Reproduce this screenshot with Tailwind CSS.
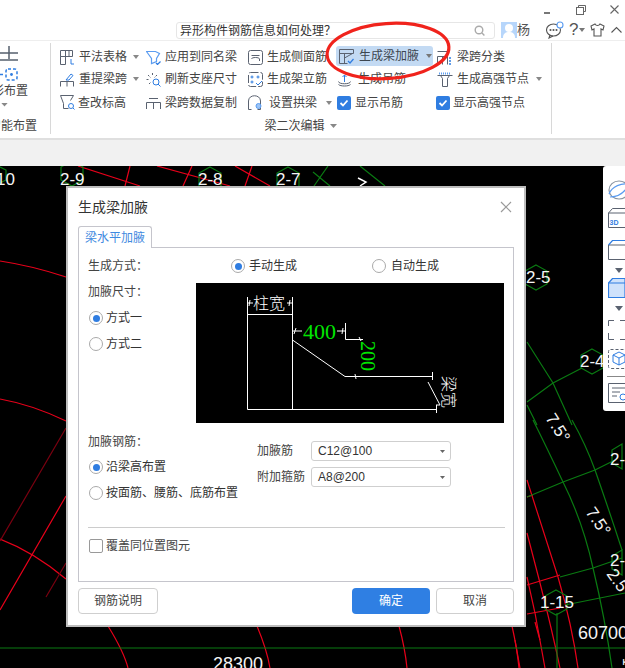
<!DOCTYPE html>
<html lang="zh">
<head>
<meta charset="utf-8">
<script src="https://cdn.jsdelivr.net/npm/@tailwindcss/browser@4"></script>
</head>
<body class="m-0 bg-black">
<div class="relative flex h-[668px] w-[625px] flex-col overflow-hidden font-['Liberation_Sans','Noto_Sans_CJK_SC',sans-serif] text-[12px] text-[#444]">

  <!-- title strip -->
  <header class="relative flex h-[41px] shrink-0 items-start border-b border-[#eeeeee] bg-white pl-[176px] pt-[22px]">
    <div class="flex h-[17px] w-[319px] items-center justify-between rounded-[3px] border border-[#e6e6e6] pl-[3px] pr-[9px] text-[#333]">
      <span>异形构件钢筋信息如何处理？</span>
      <svg class="h-[11px] w-[11px]" viewBox="0 0 11 11" fill="none" stroke="#aaa" stroke-width="1.4"><circle cx="5" cy="5" r="3.8"/><path d="M8 8l2.4 2.4"/></svg>
    </div>
    <div class="ml-[6px] flex items-center">
      <svg class="h-[16px] w-[16px]" viewBox="0 0 16 16"><rect width="16" height="16" fill="#b7d6fb"/><circle cx="8" cy="6" r="4" fill="#fff"/><path d="M2 16c0-5 3-6 6-6s6 1 6 6z" fill="#fff"/></svg>
      <span class="text-[13px] leading-[16px] text-[#555]">杨</span>
    </div>
    <svg class="ml-[16px] mt-[-1px] h-[18px] w-[18px]" viewBox="0 0 18 18" fill="none" stroke="#555" stroke-width="1.1"><ellipse cx="7.5" cy="9" rx="7" ry="6"/><path d="M4 14l-1 3 4-2"/><circle cx="4.5" cy="9" r=".5"/><circle cx="7.5" cy="9" r=".5"/><circle cx="10.5" cy="9" r=".5"/><circle cx="14" cy="4" r="3" fill="#fff" stroke="#5b9cf0"/></svg>
    <span class="ml-[5px] mt-[-2px] text-[17px] leading-[20px] text-[#555]">?</span>
    <svg class="ml-[1px] mt-[6px] h-[4px] w-[6px]" viewBox="0 0 6 4"><path d="M0 0h6L3 4z" fill="#777"/></svg>
    <svg class="ml-[5px] mt-[1px] h-[14px] w-[15px]" viewBox="0 0 15 14" fill="none" stroke="#555" stroke-width="1.1"><path d="M5 1L1 3l1 4 2-1v7h7V6l2 1 1-4-4-2c-1 2-4 2-5 0z"/></svg>
    <svg class="ml-[6px] mt-[4px] h-[7px] w-[11px]" viewBox="0 0 11 7" fill="none" stroke="#555" stroke-width="1.1"><path d="M.5 6.500l5-5 5 5"/></svg>
    <!-- window buttons -->
    <div class="absolute left-[544px] top-[5px] flex w-[81px] items-start">
      <span class="mt-[7px] h-[2px] w-[6px] bg-[#777]"></span>
      <svg class="ml-[26px] h-[10px] w-[10px]" viewBox="0 0 10 10" fill="none" stroke="#666"><path d="M2.500 2.500V.5h7v6h-2"/><rect x=".5" y="2.5" width="7" height="7"/></svg>
      <svg class="ml-[24px] h-[9px] w-[9px]" viewBox="0 0 9 9" fill="none" stroke="#666" stroke-width="1.1"><path d="M.5.5l8 8M8.500.5l-8 8"/></svg>
    </div>
  </header>

  <!-- ribbon -->
  <section class="flex h-[99px] shrink-0 border-b-2 border-[#dfdfdf] bg-white">
    <div class="mb-[4px] mt-[2px] flex w-[51px] shrink-0 flex-col overflow-hidden border-r border-[#d8d8d8]">
      <svg class="mt-[2px] h-[36px] w-[20px] shrink-0" viewBox="0 0 20 36" fill="none" stroke-width="1.5"><path d="M0 8h18M9 1v13M0 15h18" stroke="#55606e"/><rect x="6" y="24" width="11" height="11" rx="2" stroke="#2f7de1" stroke-dasharray="3 2"/><circle cx="11.500" cy="29.500" r="1.400" fill="#2f7de1" stroke="none"/><path d="M0 29.500h3" stroke="#2f7de1"/></svg>
      <div class="mt-[3px] flex h-[14px] w-[28px] justify-end self-start overflow-hidden whitespace-nowrap leading-[14px]">图形布置</div>
      <svg class="ml-[1px] mt-[7px] h-[4px] w-[7px]" viewBox="0 0 7 4"><path d="M0 0h7L3.500 4z" fill="#888"/></svg>
      <div class="mt-[11px] flex h-[16px] w-[37px] shrink-0 justify-end overflow-hidden whitespace-nowrap leading-[16px]">智能布置</div>
    </div>

    <div class="flex w-[500px] shrink-0 flex-col">
      <div class="flex pt-[5px]">
        <!-- col 1 -->
        <div class="ml-[9px] flex w-[86px] flex-col">
          <div class="flex h-[22px] items-center gap-[4px]">
            <svg class="h-[15px] w-[15px] shrink-0" viewBox="0 0 15 15" fill="none" stroke="#5a6270"><path d="M.5.500h12v6H.5zM.500 6.500h5v8h-5zM5.500.5v6M9 .5v6"/><path d="M11 9v5h3" stroke="#2f7de1"/></svg>
            <span>平法表格</span>
            <svg class="ml-[2px] h-[4px] w-[6px]" viewBox="0 0 6 4"><path d="M0 0h6L3 4z" fill="#888"/></svg>
          </div>
          <div class="flex h-[22px] items-center gap-[4px]">
            <svg class="h-[15px] w-[15px] shrink-0" viewBox="0 0 15 15" fill="none" stroke="#5a6270"><path d="M.5 14.500V9.500h13v5M7 9.500v5"/><path d="M6 8l5-6 2 1.500L9 8z" stroke="#2f7de1"/></svg>
            <span>重提梁跨</span>
            <svg class="ml-[2px] h-[4px] w-[6px]" viewBox="0 0 6 4"><path d="M0 0h6L3 4z" fill="#888"/></svg>
          </div>
          <div class="flex h-[25px] items-center gap-[3px]">
            <svg class="h-[15px] w-[15px] shrink-0" viewBox="0 0 15 15" fill="none" stroke="#5a6270"><path d="M.5.500h13l-3 5M.5.500l3 8v5h5"/><circle cx="11" cy="11" r="2.500" stroke="#2f7de1"/><path d="M13 13l1.500 1.500" stroke="#2f7de1"/></svg>
            <span>查改标高</span>
          </div>
        </div>
        <!-- col 2 -->
        <div class="flex w-[102px] flex-col">
          <div class="flex h-[22px] items-center gap-[4px]">
            <svg class="h-[15px] w-[15px] shrink-0" viewBox="0 0 15 15" fill="none" stroke="#5b9cf0" stroke-width="1.2"><path d="M.5 1.500h9l4 2-3 5v3l-5 2v-5z"/><path d="M10 13l1.500 1.500 3-3" stroke="#2f7de1"/></svg>
            <span>应用到同名梁</span>
          </div>
          <div class="flex h-[22px] items-center gap-[4px]">
            <svg class="h-[15px] w-[15px] shrink-0" viewBox="0 0 15 15" fill="none" stroke="#5a6270"><path d="M.5 7.500h3M6.500 1v3M2 3l2.500 2.500M11 3L8.500 5.500M3 12l2-2" stroke-dasharray="2 1"/><circle cx="10" cy="10" r="3" stroke="#2f7de1"/><path d="M12 12l2.500 2.500" stroke="#2f7de1"/></svg>
            <span>刷新支座尺寸</span>
          </div>
          <div class="flex h-[25px] items-center gap-[4px]">
            <svg class="h-[15px] w-[15px] shrink-0" viewBox="0 0 15 15" fill="none" stroke="#5a6270"><path d="M.5 14V7.500h14V14M7.500 7.500V14M3 3.500h9"/></svg>
            <span>梁跨数据复制</span>
          </div>
        </div>
        <!-- col 3 -->
        <div class="flex w-[88px] flex-col">
          <div class="flex h-[22px] items-center gap-[4px]">
            <svg class="h-[15px] w-[15px] shrink-0" viewBox="0 0 15 15" fill="none" stroke="#5a6270"><rect x=".5" y=".5" width="14" height="14" rx="2"/><path d="M3.500 5.500h8M3.500 9c0-2 8-2 8 0v2"/></svg>
            <span>生成侧面筋</span>
          </div>
          <div class="flex h-[22px] items-center gap-[4px]">
            <svg class="h-[15px] w-[15px] shrink-0" viewBox="0 0 15 15" fill="none" stroke="#5a6270"><rect x=".5" y=".5" width="14" height="14" rx="2" stroke-dasharray="8 2"/><circle cx="4" cy="5" r="1" stroke="#2f7de1"/><circle cx="10" cy="5" r="1" stroke="#2f7de1"/><circle cx="4" cy="10" r="1" stroke="#2f7de1"/><path d="M8 11l2 2 4-4" stroke="#2f7de1"/></svg>
            <span>生成架立筋</span>
          </div>
          <div class="flex h-[25px] items-center gap-[6px]">
            <svg class="h-[15px] w-[15px] shrink-0" viewBox="0 0 15 15" fill="none" stroke="#5a6270"><path d="M.5 14.500V6c0-7 12-7 12 0v8.500M.5 14.500h3M9.500 14.500h3"/><circle cx="10.500" cy="11" r="2.500" fill="#9cc4f5" stroke="#5b9cf0"/></svg>
            <span>设置拱梁</span>
            <svg class="ml-[3px] h-[4px] w-[6px]" viewBox="0 0 6 4"><path d="M0 0h6L3 4z" fill="#888"/></svg>
          </div>
        </div>
        <!-- col 4 -->
        <div class="flex w-[101px] flex-col">
          <div class="flex h-[20px] w-[97px] items-center gap-[4px] rounded-[3px] bg-[#c3daf3] pl-[3px] text-[#3d4650]">
            <svg class="h-[15px] w-[16px] shrink-0" viewBox="0 0 16 15" fill="none" stroke="#5a6270"><path d="M.5.500h14M.5 4.500h14V.5M.5.500v14h8M5.500 4.500v10M5.500 9l8-4.500"/><path d="M9 12l2 2 3.500-4" stroke="#2f7de1" stroke-width="1.200"/></svg>
            <span>生成梁加腋</span>
            <svg class="ml-[3px] h-[4px] w-[6px]" viewBox="0 0 6 4"><path d="M0 0h6L3 4z" fill="#777"/></svg>
          </div>
          <div class="mt-[2px] flex h-[22px] items-center gap-[5px] pl-[2px]">
            <svg class="h-[15px] w-[15px] shrink-0" viewBox="0 0 15 15" fill="none" stroke="#5a6270"><path d="M.5 12.500c2 2 10 2 12 0M.5 9.500c0 3 12 3 12 0"/><path d="M6.500 3v7" stroke="#2f7de1"/><path d="M4.500 5l2-2 2 2" stroke="#2f7de1"/></svg>
            <span>生成吊筋</span>
          </div>
          <div class="flex h-[25px] items-center gap-[4px] pl-[1px]">
            <span class="flex h-[14px] w-[14px] items-center justify-center rounded-[2px] bg-[#2f7de1]"><svg class="h-[10px] w-[10px]" viewBox="0 0 10 10" fill="none" stroke="#fff" stroke-width="1.800"><path d="M1.500 5l2.500 2.500 4.500-5"/></svg></span>
            <span>显示吊筋</span>
          </div>
        </div>
        <!-- col 5 -->
        <div class="flex flex-col">
          <div class="flex h-[22px] items-center gap-[5px]">
            <svg class="h-[15px] w-[15px] shrink-0" viewBox="0 0 15 15" fill="none" stroke="#5a6270"><path d="M.5 1.500h11M.5 14.500V6.500h10v8M5.500 6.500v8"/><path d="M12 8h2M12 11h2M12 14h2" stroke="#2f7de1" stroke-width="1.500"/></svg>
            <span>梁跨分类</span>
          </div>
          <div class="flex h-[22px] items-center gap-[4px]">
            <svg class="h-[15px] w-[16px] shrink-0" viewBox="0 0 16 15" fill="none" stroke="#5a6270"><path d="M.5 3.500h15M3.500 3.500l2 3v8h5v-8l2-3"/><path d="M2 1.500h12" stroke="#5b9cf0" stroke-dasharray="1 1" stroke-width="2"/></svg>
            <span>生成高强节点</span>
            <svg class="ml-[3px] h-[4px] w-[6px]" viewBox="0 0 6 4"><path d="M0 0h6L3 4z" fill="#888"/></svg>
          </div>
          <div class="flex h-[25px] items-center gap-[3px]">
            <span class="-ml-[1px] flex h-[14px] w-[14px] items-center justify-center rounded-[2px] bg-[#2f7de1]"><svg class="h-[10px] w-[10px]" viewBox="0 0 10 10" fill="none" stroke="#fff" stroke-width="1.800"><path d="M1.500 5l2.500 2.500 4.500-5"/></svg></span>
            <span>显示高强节点</span>
          </div>
        </div>
      </div>
      <div class="mt-[3px] flex items-center justify-center gap-[5px] pr-[1px] leading-[16px]">
        <span>梁二次编辑</span>
        <svg class="h-[4px] w-[7px]" viewBox="0 0 7 4"><path d="M0 0h7L3.500 4z" fill="#888"/></svg>
      </div>
    </div>
    <div class="mb-[4px] mt-[2px] w-0 border-l border-[#d8d8d8]"></div>
  </section>

  <div class="h-[26px] shrink-0 bg-[#f1f1f1]"></div>

  <!-- CAD canvas -->
  <main class="relative flex-1 bg-black">
    <svg class="absolute inset-0 h-[502px] w-[625px]" viewBox="0 166 625 502" fill="none" font-family="'Liberation Sans',sans-serif">
      <g stroke="#e8001a" stroke-width="1.200">
        <path d="M78 166l62 20M130 166l-5 20M157 166l73 20M192 166l-9 20M235 166l35 20M252 166l-7 20"/>
        <path d="M0 261q33 5 66 16M0 399q33 6 66 22M66 496L0 610M0 539q34 13 66 40"/>
        <path d="M108 626q16 26 20 42M257 626q10 24 13 42M399 626q6 22 8 42M512 626q5 22 7 42M535 622l5 18"/>
        <path d="M527 480L558 577Q572 625 578 668M527 533L540 583Q552 630 560 668M527 577L535 613L545 668M515 640l5 28"/>
        <path d="M527 497l6-2M527 585l33-10M527 614l33-6"/>
      </g>
      <path d="M66 428L0 541M66 563l-20 34" stroke="#7a0010" stroke-width="1.200"/>
      <g stroke="#0a7a12" stroke-width="1.200">
        <path d="M0 648h625"/>
        <path d="M328 166l-14 20M360 166l25 20M313 172l17 14"/>
        <path d="M527 342l26 41 19 42M527 402l26-19 29-15M527 405l10 20"/>
        <path d="M533 420q14 28 30 62 20 40 30 86 12 50 19 100M572 420q14 25 23 50 14 40 27 80"/>
        <path d="M527 497l36-15 32-12 20-10M560 577l33-9 29-10M565 605l35-7 25-5M557 613v55"/>
        <path d="M72 161l11 6 0 13-11 6-11-6 0-13z M210 167l11 6 0 13-11 6-11-6 0-13z M288 167l11 6 0 13-11 6-11-6 0-13z M-2 166l8 4v10l-8 4z"/>
        <path d="M536 265l11 6v13l-11 6-11-6v-13zM592 349l11 6v13l-11 6-11-6v-13zM556 590l11 6v13l-11 6-11-6v-13zM622 444l-10 6v13l10 6zM622 550l-10 6v13l10 6z"/>
      </g>
      <g fill="#f4f4f4" font-size="17">
        <text x="-4" y="185">10</text>
        <text x="60" y="185">2-9</text>
        <text x="198" y="185">2-8</text>
        <text x="276" y="185">2-7</text>
        <text x="526" y="283">2-5</text>
        <text x="580" y="367">2-4</text>
        <text x="540" y="608">1-15</text>
        <text x="610" y="465">2-</text>
        <text x="610" y="566">2-</text>
        <text x="578" y="639" font-size="18">60700</text>
        <text x="213" y="670" font-size="18">28300</text>
        <text transform="translate(545 418) rotate(58)" x="0" y="0">7.5°</text>
        <text transform="translate(585 512) rotate(56)" x="0" y="0">7.5°</text>
        <text transform="translate(606 574) rotate(54)" x="0" y="0">2.5°</text>
        <text transform="translate(623 658) rotate(90)" x="0" y="0" font-size="14">1</text>
      </g>
      <path d="M358 178l8 4-6 4" stroke="#fff" stroke-width="1.500"/>
    </svg>

    <!-- right view tools -->
    <aside class="absolute left-[603px] top-0 flex h-[245px] w-[22px] flex-col items-start overflow-hidden rounded-l-[3px] bg-white pl-[5px] pt-[14px]">
      <svg class="h-[20px] w-[20px] shrink-0" viewBox="0 0 20 20" fill="none" stroke="#5b9cf0" stroke-width="1.200"><ellipse cx="11" cy="10" rx="10" ry="9" stroke="#8a94a0"/><path d="M1 14C4 6 14 3 20 4M2 17c7 0 14-4 18-11"/></svg>
      <svg class="mt-[8px] h-[20px] w-[17px] shrink-0" viewBox="0 0 17 20" fill="none" stroke="#5a6270"><path d="M.5 5l4-4.500h12.500M.5 5v14.500h16.500M.5 5h16.500"/><text x="1.500" y="17" font-size="7" font-weight="700" fill="#2f7de1" stroke="none" font-family="'Liberation Sans',sans-serif">3D</text></svg>
      <svg class="mt-[12px] h-[20px] w-[17px] shrink-0" viewBox="0 0 17 20" fill="none" stroke="#5a6270"><path d="M.5 5v14.500h16.500M.5 5h16.500"/><path d="M.5 5l4-4.500h12.500" stroke="#2f7de1" stroke-width="1.200"/></svg>
      <svg class="ml-[7px] mt-[8px] h-[5px] w-[8px] shrink-0" viewBox="0 0 8 5"><path d="M0 0h8L4 5z" fill="#5a6270"/></svg>
      <svg class="mt-[5px] h-[20px] w-[17px] shrink-0" viewBox="0 0 17 20" fill="#cfe2fb" stroke="#2f7de1" stroke-width="1.200"><path d="M.5 5l4-4.500h12.500v19H.5z"/><path d="M.5 5h16.500" fill="none"/></svg>
      <svg class="ml-[7px] mt-[8px] h-[5px] w-[8px] shrink-0" viewBox="0 0 8 5"><path d="M0 0h8L4 5z" fill="#5a6270"/></svg>
      <svg class="mt-[9px] h-[20px] w-[17px] shrink-0" viewBox="0 0 17 20" fill="none" stroke="#5a6270"><path d="M6 .500H.5V6M.5 13v6.500H6M12 .500h5M12 19.500h5"/></svg>
      <svg class="mt-[9px] h-[20px] w-[17px] shrink-0" viewBox="0 0 17 20" fill="none"><rect x=".5" y=".5" width="18" height="19" rx="2" stroke="#5a6270" stroke-dasharray="3 2"/><path d="M5 6l6-3 6 3v7l-6 3-6-3zM5 6l6 3 6-3M11 9v7" stroke="#2f7de1"/></svg>
      <span class="-ml-[1px] mt-[7px] h-px w-[18px] shrink-0 bg-[#888]"></span>
      <svg class="mt-[6px] h-[20px] w-[17px] shrink-0" viewBox="0 0 17 20" fill="none" stroke="#5a6270"><path d="M17 .500H.5v19H17"/><path d="M4 5h13M4 9h8M4 13h5"/><circle cx="15" cy="14" r="3" stroke="#2f7de1"/></svg>
    </aside>

    <!-- dialog -->
    <div class="absolute left-[66px] top-[20px] flex h-[441px] w-[460px] flex-col border-2 border-[#bdbdbd] bg-white px-[10px] text-[#444]">
      <div class="flex h-[38px] shrink-0 items-center justify-between pr-[2px]">
        <span class="text-[14px] text-[#333]">生成梁加腋</span>
        <svg class="h-[12px] w-[12px]" viewBox="0 0 12 12" fill="none" stroke="#9a9a9a" stroke-width="1.200"><path d="M1 1l10 10M11 1L1 11"/></svg>
      </div>
      <div class="relative z-10 flex h-[22px] w-[74px] shrink-0 items-center justify-center rounded-t-[3px] border border-b-0 border-[#c5c5cc] bg-white text-[#3f8ae0]">梁水平加腋</div>
      <div class="-mt-px flex h-[335px] w-[436px] shrink-0 flex-col border border-[#c5c5cc] pl-[9px]">
        <div class="flex h-[35px] shrink-0 items-center pt-[1px]">
          <span class="w-[143px]">生成方式：</span>
          <span class="flex w-[141px] items-center gap-[4px]">
            <span class="flex h-[14px] w-[14px] items-center justify-center rounded-full border border-[#aaa]"><span class="h-[7px] w-[7px] rounded-full bg-[#2f7de1]"></span></span>
            <span class="text-[#333]">手动生成</span>
          </span>
          <span class="flex items-center gap-[5px]">
            <span class="h-[14px] w-[14px] rounded-full border border-[#aaa]"></span>
            <span class="text-[#333]">自动生成</span>
          </span>
        </div>
        <div class="flex h-[140px] shrink-0 items-start">
          <div class="flex w-[108px] shrink-0 flex-col">
            <span class="flex h-[18px] items-center">加腋尺寸：</span>
            <div class="mt-[4px] flex h-[26px] items-center gap-[3px] pl-px text-[#333]">
              <span class="flex h-[14px] w-[14px] items-center justify-center rounded-full border border-[#aaa]"><span class="h-[7px] w-[7px] rounded-full bg-[#2f7de1]"></span></span>
              <span>方式一</span>
            </div>
            <div class="flex h-[26px] items-center gap-[3px] pl-px text-[#333]">
              <span class="h-[14px] w-[14px] rounded-full border border-[#aaa]"></span>
              <span>方式二</span>
            </div>
          </div>
          <svg class="h-[140px] w-[308px] shrink-0 bg-black" viewBox="196 283 308 140" fill="none">
            <g stroke="#fff" stroke-width="1">
              <path d="M247.500 297v112.500H436M247.500 314.500h45M292.500 297v112.500M292.500 340l52.500 36.500H432M432.500 372v8M436.500 405v8M428 382l12 23M436 405h4"/>
              <path d="M247 303h6M287 303h6M250 300l-1 6M290 300l-1 6M345.500 323v16.500H363M293 331h9M337 331h8M296 328l-2 6M343 328l-1 6M359 337l2 4M355 374l1 5"/>
            </g>
            <text x="253" y="309" font-size="16" fill="#fff" font-family="'Noto Sans CJK SC',sans-serif" font-weight="300">柱宽</text>
            <text x="303" y="339" font-size="22" fill="#00e600" font-family="'Liberation Serif',serif">400</text>
            <text transform="translate(361 341) rotate(90)" font-size="20" fill="#00e600" font-family="'Liberation Serif',serif">200</text>
            <text transform="translate(443 376) rotate(90)" font-size="16" fill="#fff" font-family="'Noto Sans CJK SC',sans-serif" font-weight="300">梁宽</text>
          </svg>
        </div>
        <div class="mt-[10px] flex h-[80px] shrink-0 items-start">
          <div class="flex w-[169px] shrink-0 flex-col">
            <span class="flex h-[18px] items-center">加腋钢筋：</span>
            <div class="mt-[3px] flex h-[26px] items-center gap-[3px] pl-px text-[#333]">
              <span class="flex h-[14px] w-[14px] items-center justify-center rounded-full border border-[#aaa]"><span class="h-[7px] w-[7px] rounded-full bg-[#2f7de1]"></span></span>
              <span>沿梁高布置</span>
            </div>
            <div class="flex h-[26px] items-center gap-[3px] pl-px text-[#333]">
              <span class="h-[14px] w-[14px] rounded-full border border-[#aaa]"></span>
              <span class="whitespace-nowrap">按面筋、腰筋、底筋布置</span>
            </div>
          </div>
          <div class="flex flex-col gap-[6px] pt-[8px]">
            <div class="flex items-center">
              <span class="w-[54px]">加腋筋</span>
              <span class="flex h-[20px] w-[140px] items-center justify-between rounded-[3px] border border-[#cfcfcf] pl-[6px] pr-[5px] text-[#333]">C12@100<svg class="h-[3px] w-[5px]" viewBox="0 0 5 3"><path d="M0 0h5L2.500 3z" fill="#666"/></svg></span>
            </div>
            <div class="flex items-center">
              <span class="w-[54px]">附加箍筋</span>
              <span class="flex h-[20px] w-[140px] items-center justify-between rounded-[3px] border border-[#cfcfcf] pl-[6px] pr-[5px] text-[#333]">A8@200<svg class="h-[3px] w-[5px]" viewBox="0 0 5 3"><path d="M0 0h5L2.500 3z" fill="#666"/></svg></span>
            </div>
          </div>
        </div>
        <div class="mr-[8px] mt-[14px] h-px shrink-0 bg-[#cccccc]"></div>
        <div class="mt-[9px] flex items-center gap-[3px] pl-px">
          <span class="h-[14px] w-[14px] rounded-[2px] border border-[#999]"></span>
          <span>覆盖同位置图元</span>
        </div>
      </div>
      <div class="mt-[6px] flex h-[26px] w-[436px] shrink-0 items-stretch">
        <span class="flex w-[80px] items-center justify-center rounded-[4px] border border-[#cfcfcf]">钢筋说明</span>
        <span class="ml-[194px] flex w-[78px] items-center justify-center rounded-[4px] bg-[#2f7fe3] text-white">确定</span>
        <span class="ml-[6px] flex w-[78px] items-center justify-center rounded-[4px] border border-[#cfcfcf]">取消</span>
      </div>
    </div>
  </main>

  <!-- hand-drawn annotation -->
  <svg class="pointer-events-none absolute left-[320px] top-[16px] h-[72px] w-[140px]" viewBox="320 16 140 72" fill="none"><ellipse cx="388" cy="51" rx="61" ry="27.500" transform="rotate(-4 388 51)" stroke="#f0231c" stroke-width="3.200"/></svg>
</div>
</body>
</html>
